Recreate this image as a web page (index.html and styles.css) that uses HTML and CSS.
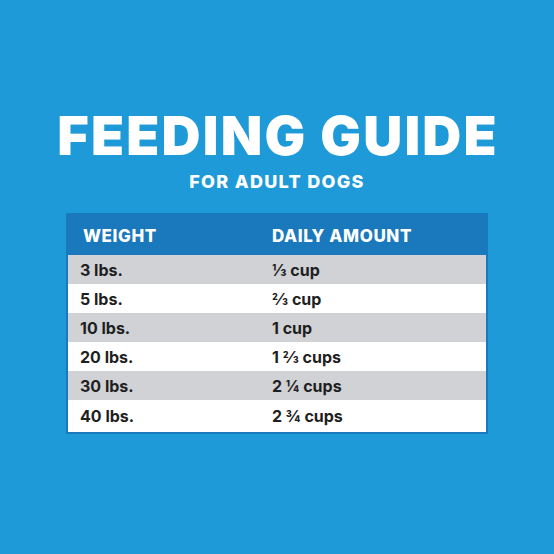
FILE: index.html
```html
<!DOCTYPE html>
<html lang="en">
  <head>
    <meta charset="UTF-8" />
    <meta name="viewport" content="width=device-width, initial-scale=1.0" />
    <title>Feeding Guide</title>
    <link rel="stylesheet" href="styles.css">
  </head>
  <body>
    <div class="container">
      <h1>Feeding Guide</h1>
      <h2>For Adult Dogs</h2>

      <table class="guide">
        <thead>
          <tr>
            <th>Weight</th>
            <th>Daily Amount</th>
          </tr>
        </thead>
        <tbody>
          <tr><td>3 lbs.</td><td>⅓ cup</td></tr>
          <tr><td>5 lbs.</td><td>⅔ cup</td></tr>
          <tr><td>10 lbs.</td><td>1 cup</td></tr>
          <tr><td>20 lbs.</td><td>1 ⅔ cups</td></tr>
          <tr><td>30 lbs.</td><td>2 ¼ cups</td></tr>
          <tr><td>40 lbs.</td><td>2 ¾ cups</td></tr>
        </tbody>
      </table>
    </div>
  </body>
</html>
```

FILE: styles.css
```css
* {
  margin: 0;
  padding: 0;
  box-sizing: border-box;
  font-family: Inter, Roboto, "Liberation Sans", Arial, sans-serif;
}

body {
  background: #1e9ad9;
  width: 554px;
  height: 554px;
  overflow: hidden;
}

.container {
  display: flex;
  flex-direction: column;
  align-items: center;
  padding-top: 106px;
}

h1 {
  font-size: 54px;
  line-height: 60px;
  font-weight: 900;
  text-transform: uppercase;
  color: #ffffff;
  letter-spacing: 2.2px;
  margin-right: -2px;
}

h2 {
  margin-top: 6px;
  font-size: 18px;
  line-height: 20px;
  font-weight: 800;
  text-transform: uppercase;
  color: #ffffff;
  letter-spacing: 1.3px;
}

.guide {
  margin-top: 21px;
  width: 422px;
  table-layout: fixed;
  border-collapse: collapse;
  border: 2px solid #1a79bc;
  background: #ffffff;
}

.guide th {
  height: 41px;
  padding: 2px 0 0 0;
  background: #1a79bc;
  color: #ffffff;
  font-size: 17px;
  font-weight: 800;
  text-align: left;
  text-transform: uppercase;
  letter-spacing: 0.6px;
}

.guide td {
  height: 29px;
  padding: 0;
  color: #1f1f1f;
  font-size: 16px;
  font-weight: 700;
  text-align: left;
}

.guide th:first-child {
  width: 205px;
  padding-left: 15px;
}

.guide td:first-child {
  padding-left: 12px;
}

.guide tbody tr:nth-child(odd) td {
  background: #d0d2d6;
}

.guide tbody tr:last-child td {
  height: 33px;
}
```
